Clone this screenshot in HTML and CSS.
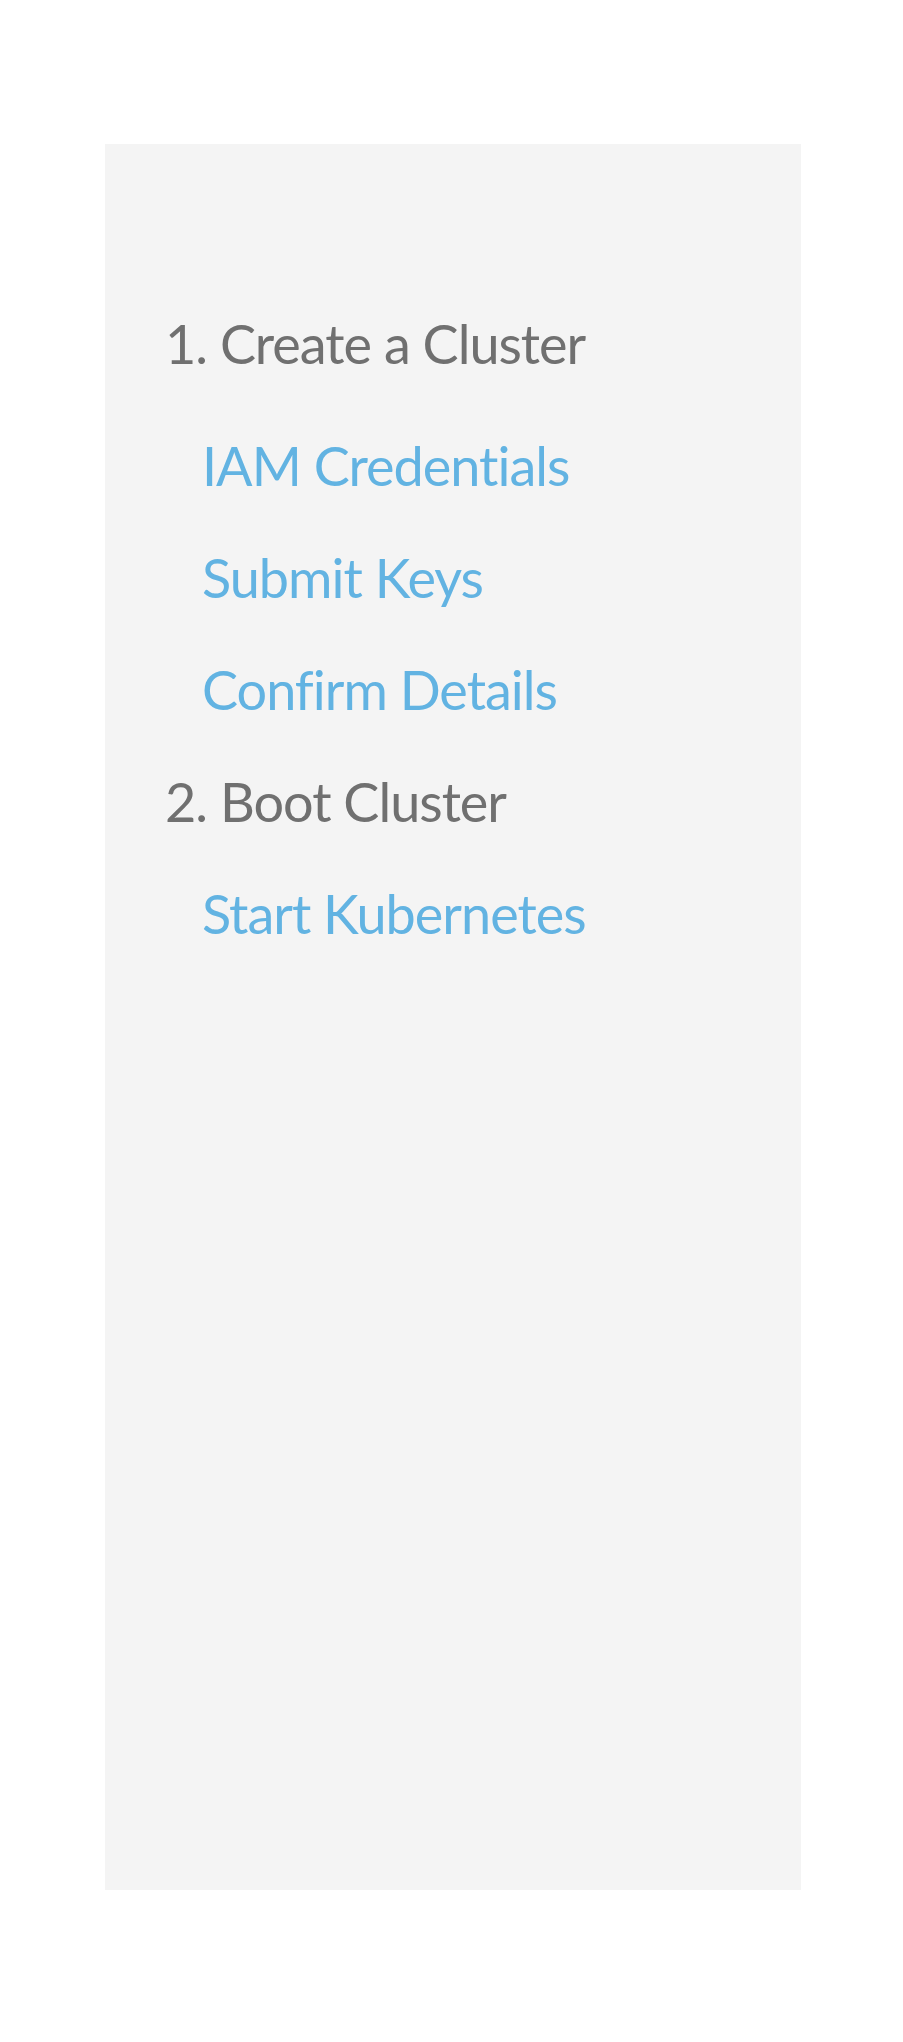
FILE: index.html
```html
<!DOCTYPE html>
<html lang="en">
<head>
    <meta charset="UTF-8">
    <meta name="viewport" content="width=device-width, initial-scale=1.0">
    <title>Cluster Setup</title>
    <link rel="stylesheet" href="styles.css">
</head>
<body>
    <div class="sidebar">
        <ol class="steps">
            <li class="step">
                <div class="step-title">1. Create a Cluster</div>
                <ul class="substeps">
                    <li><a href="#">IAM Credentials</a></li>
                    <li><a href="#">Submit Keys</a></li>
                    <li><a href="#">Confirm Details</a></li>
                </ul>
            </li>
            <li class="step">
                <div class="step-title">2. Boot Cluster</div>
                <ul class="substeps">
                    <li><a href="#">Start Kubernetes</a></li>
                </ul>
            </li>
        </ol>
    </div>
</body>
</html>
```

FILE: styles.css
```css
* {
    box-sizing: border-box;
}
body {
    font-family: 'Lato', sans-serif;
    margin: 0;
    padding: 0;
    background: #fff;
}
.sidebar {
    width: 696px;
    height: 1746px;
    margin: 144px 0 0 105px;
    padding: 144px 0 0 60px;
    background: #f4f4f4;
}
.steps, .substeps {
    list-style: none;
    margin: 0;
    padding: 0;
}
.step-title, .substeps li {
    font-size: 54px;
    line-height: 112px;
    letter-spacing: -1px;
    font-variant-ligatures: none;
}
.step-title {
    color: #707070;
}
.step:first-child .step-title {
    margin-bottom: 10px;
}
.substeps {
    padding-left: 37px;
}
.substeps a {
    color: #62b3e2;
    text-decoration: none;
}
```
